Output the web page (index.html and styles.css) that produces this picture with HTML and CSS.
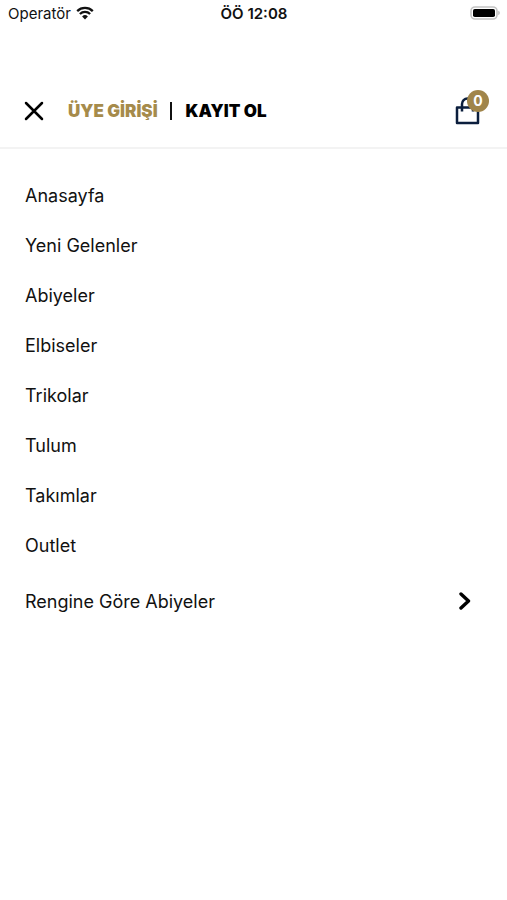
FILE: index.html
```html
<!DOCTYPE html>
<html lang="tr">
<head>
<meta charset="utf-8">
<meta name="viewport" content="width=device-width, initial-scale=1">
<title>Menü</title>
<link rel="stylesheet" href="styles.css">
</head>
<body>
<div class="status">
  <div class="status-carrier">
    <span>Operatör</span>
    <svg width="18" height="14" viewBox="0 0 18 14" aria-hidden="true">
      <path d="M1.2 5.1a11.2 11.2 0 0 1 15.6 0M3.9 8a7.3 7.3 0 0 1 10.2 0" fill="none" stroke="#111" stroke-width="2.3"/>
      <path d="M9 13.4 6.1 10.5a4.1 4.1 0 0 1 5.8 0z" fill="#111"/>
    </svg>
  </div>
  <div class="status-time">ÖÖ 12:08</div>
  <svg class="status-battery" width="30" height="14" viewBox="0 0 30 14" aria-hidden="true">
    <rect x="1" y="1" width="26" height="12" rx="4" fill="#fff" stroke="#c4c4c4" stroke-width="1.6"/>
    <rect x="3" y="3" width="22" height="8" rx="1.8" fill="#000"/>
    <path d="M28.3 4.8a2.4 2.4 0 0 1 0 4.4z" fill="#b5b5b5"/>
  </svg>
</div>
<header class="header">
  <button class="icon-button" type="button" aria-label="Kapat">
    <svg width="20" height="20" viewBox="0 0 20 20" aria-hidden="true"><path d="M2 2l16 16M18 2L2 18" stroke="#000" stroke-width="2.5" stroke-linecap="round"/></svg>
  </button>
  <div class="account">
    <a class="account-link account-login" href="#">ÜYE GİRİŞİ</a>
    <span class="divider"></span>
    <a class="account-link" href="#">KAYIT OL</a>
  </div>
  <button class="icon-button cart" type="button" aria-label="Sepet">
    <svg width="26" height="28" viewBox="0 0 26 28" aria-hidden="true"><path d="M2 10.500h21v15.500H2zM7 14.500V7a5.500 5.500 0 0 1 11 0v7.500" fill="none" stroke="#0b1e3d" stroke-width="2.500" stroke-linejoin="round"/></svg>
    <span class="badge">0</span>
  </button>
</header>
<nav class="menu">
  <a class="item" href="#">Anasayfa</a>
  <a class="item" href="#">Yeni Gelenler</a>
  <a class="item" href="#">Abiyeler</a>
  <a class="item" href="#">Elbiseler</a>
  <a class="item" href="#">Trikolar</a>
  <a class="item" href="#">Tulum</a>
  <a class="item" href="#">Takımlar</a>
  <a class="item" href="#">Outlet</a>
  <a class="item item-parent" href="#">
    <span>Rengine Göre Abiyeler</span>
    <svg width="12" height="18" viewBox="0 0 12 18" aria-hidden="true"><path d="M2 2l7.500 7L2 16" fill="none" stroke="#000" stroke-width="3.400" stroke-linecap="round" stroke-linejoin="round"/></svg>
  </a>
</nav>
</body>
</html>
```

FILE: styles.css
```css
* { box-sizing: border-box; }
body {
  margin: 0;
  background: #fff;
  color: #111;
  font-family: Inter, "Open Sans", sans-serif;
}
a { color: inherit; text-decoration: none; }
svg { display: block; }
.status {
  display: grid;
  grid-template-columns: 1fr auto 1fr;
  align-items: center;
  height: 28px;
  padding: 0 7px 2px 8px;
  font-size: 15px;
}
.status-carrier { display: flex; align-items: center; gap: 5px; }
.status-time { font-weight: 600; }
.status-battery { justify-self: end; }
.header {
  display: flex;
  align-items: center;
  height: 121px;
  padding: 46px 26px 0 24px;
  border-bottom: 2px solid #f3f3f3;
}
.icon-button {
  position: relative;
  padding: 0;
  border: 0;
  background: none;
}
.account {
  display: flex;
  flex: 1;
  align-items: center;
  margin-left: 24px;
  color: #000;
  font-size: 17px;
  font-weight: 900;
}
.account-login { color: #a68b4b; }
.divider {
  width: 2px;
  height: 18px;
  margin: 0 14px 0 12px;
  background: #111;
}
.badge {
  position: absolute;
  top: -7px;
  right: -8px;
  width: 22px;
  height: 22px;
  border-radius: 50%;
  background: #a0854a;
  color: #fff;
  font: 700 14px/22px Inter, sans-serif;
  text-align: center;
}
.menu {
  display: flex;
  flex-direction: column;
  padding: 21px 36px 0 25px;
}
.item {
  display: flex;
  align-items: center;
  justify-content: space-between;
  height: 50px;
  font-size: 18px;
}
.item-parent { height: 62px; }
```
